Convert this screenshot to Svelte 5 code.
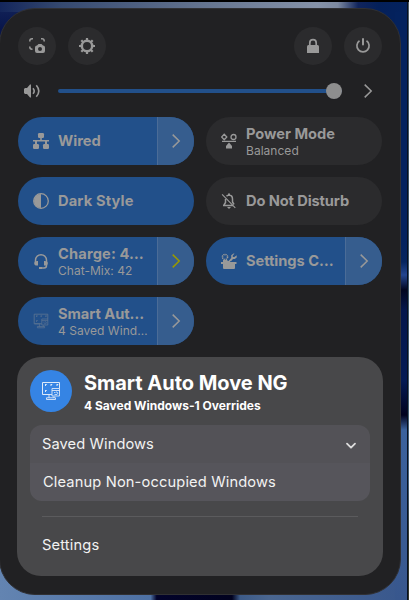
<script>
  const tiles = [
    { icon: 'wired', title: 'Wired', on: true, arrow: true, spacing: 0 },
    { icon: 'power', title: 'Power Mode', sub: 'Balanced', spacing: -0.03 },
    { icon: 'dark', title: 'Dark Style', on: true, spacing: 0.14 },
    { icon: 'dnd', title: 'Do Not Disturb', spacing: -0.12 },
    { icon: 'headset', title: 'Charge: 4…', sub: 'Chat-Mix: 42', on: true, arrow: true, warn: true, spacing: 0.14 },
    { icon: 'tools', title: 'Settings C…', on: true, arrow: true, spacing: -0.05 },
    { icon: 'monitor', title: 'Smart Aut…', sub: '4 Saved Wind…', on: true, arrow: true, spacing: -0.05 }
  ];
</script>

{#snippet monitor()}
  <g fill="none" stroke="currentColor" stroke-width="1">
    <path d="M9.500 13.500h-8v-12h17v6" />
    <path d="M11 7.500h7.500v7.500H11zM11 9.500h7.500M2 13.500h9M8 14v3M13 15.500v1.500M5.500 16.800h9v1.700h-9z" stroke-width=".9" />
    <path d="M13 11.500h1.500M13.500 13.500h2.500l.800-1.300-.800-1.200h-1" stroke-width=".8" />
    <path d="M4 5l1.500-1.500M9.500 5L11 3.500M15.500 5L17 3.500M4 11l1.500-1.500M4 3.500h1.500M9.500 3.500H11M15.500 3.500H17M4 9.500h1.500" />
  </g>
{/snippet}

{#snippet chevron()}
  <svg class="chev" width="16" height="16" viewBox="0 0 16 16"><path d="M4.700 1.600L11.200 8l-6.500 6.400" fill="none" stroke="currentColor" stroke-width="1.500" /></svg>
{/snippet}

{#snippet icon(name)}
  <svg class="icon" width="16" height="16" viewBox={name === 'monitor' ? '0 0 20 20' : '0 0 16 16'} fill="currentColor">
    {#if name === 'wired'}
      <rect x="5" y="0" width="6" height="5" rx="1.200" /><rect x="0" y="11" width="6" height="5" rx="1.200" /><rect x="10" y="11" width="6" height="5" rx="1.200" />
      <path d="M7.200 4h1.600v3H16v1.500h-2V12h-2V8.500H4V12H2V8.500H0V7h7.200z" />
    {:else if name === 'power'}
      <circle cx="12.500" cy="4" r="2.500" fill="none" stroke="currentColor" stroke-width="1.300" />
      <path d="M3.200 1.300L5.800 4 3.200 6.700.600 4z" fill="none" stroke="currentColor" stroke-width="1.300" />
      <path d="M1 7.800h14v1.300H1zM8 9.500L11 13v2.500H5V13z" />
    {:else if name === 'dark'}
      <circle cx="8" cy="8" r="7.300" fill="none" stroke="currentColor" stroke-width="1.300" /><path d="M8 1a7 7 0 000 14z" />
    {:else if name === 'dnd'}
      <path d="M2 12.500h10M3 12l1.500-2.500V6M5.500 3.300Q6.500 2 8 2q3.500.200 3.500 4v3l1.500 2.500M7 1.200h2" fill="none" stroke="currentColor" stroke-width="1.500" />
      <path d="M6 14h4l-2 2zM1.500 1l13.200 13.500-.800.800L.700 1.800z" />
    {:else if name === 'headset'}
      <path d="M2.500 9V7.200a5.500 5.500 0 0111 0V12.500q0 2.500-2.500 2.500H8" fill="none" stroke="currentColor" stroke-width="1.500" />
      <path d="M4.500 8H5v4.500H4Q1.200 12.500 1.200 10.200T4.500 8zM11.500 8H11v4.500h1q2.800 0 2.800-2.300T11.500 8zM6 14h3v2H6z" />
    {:else if name === 'tools'}
      <circle cx="4" cy="4" r="2.600" fill="none" stroke="currentColor" stroke-width="1.500" stroke-dasharray="1.300 .750" />
      <path d="M15.700 2.200V4.500L13.800 6H12l-2 2.300H7.300L10.200 5V2.200L12.500.500h1L11.800 2.400v1.500h1.500zM0 9h15.500v2H14v4q0 1-1 1H3q-1 0-1-1v-4H0zM2 7h4l1 1h2v1H2z" />
    {:else}{@render monitor()}{/if}
  </svg>
{/snippet}

<div class="desktop">
  <div class="panel">
    <div class="top">
      <button aria-label="Screenshot"><svg width="16" height="16" viewBox="0 0 16 16">
        <path d="M.8 3.500V3Q.8.800 3 .800h1M12 .800h1Q15.200.800 15.200 3v.500M.8 8.500V9q0 2.200 2.200 2.200h.500" fill="none" stroke="currentColor" stroke-width="1.500" />
        <path fill-rule="evenodd" d="M8 7.500L9.500 6h3L14 7.500q2 0 2 2V13q0 2-2 2H8q-2 0-2-2V9.500q0-2 2-2zM11 9a2 2 0 100 4 2 2 0 000-4z" fill="currentColor" />
      </svg></button>
      <button aria-label="Settings"><svg width="16" height="16" viewBox="0 0 16 16">
        <circle cx="8" cy="8" r="5.200" fill="none" stroke="currentColor" stroke-width="2.500" />
        <path d="M8 0v3M8 13v3M0 8h3M13 8h3M2.300 2.300l2 2M11.700 11.700l2 2M13.700 2.300l-2 2M4.300 11.700l-2 2" fill="none" stroke="currentColor" stroke-width="2.200" />
      </svg></button>
      <span class="grow"></span>
      <button aria-label="Lock"><svg width="16" height="16" viewBox="0 0 16 16">
        <path d="M4.800 8V4.900a3.200 3.200 0 016.400 0V8" fill="none" stroke="currentColor" stroke-width="1.700" /><path d="M2 8.500Q2 7 3.500 7h9Q14 7 14 8.500V15H2z" fill="currentColor" />
      </svg></button>
      <button aria-label="Power"><svg width="16" height="16" viewBox="0 0 16 16">
        <path d="M4.500 2.800a6.100 6.100 0 107 0" fill="none" stroke="currentColor" stroke-width="1.700" /><path d="M8 1v5.500" stroke="currentColor" stroke-width="2" stroke-linecap="round" />
      </svg></button>
    </div>

    <div class="volume">
      <svg width="16" height="16" viewBox="0 0 16 16"><path d="M0 6l1-1h2l3-3.500h1v13H6L3 11H1l-1-1z" fill="currentColor" />
        <path d="M9 5.200q2.400 2.800 0 5.600M12.300 2.200q5 5.800 0 11.600" fill="none" stroke="currentColor" stroke-width="1.600" /></svg>
      <div class="track"><span></span></div>
      {@render chevron()}
    </div>

    <div class="grid">
      {#each tiles as t}
        <div class="tile" class:on={t.on}>
          <div class="body">
            <span class="ic" class:dim={t.icon === 'monitor'}>{@render icon(t.icon)}</span>
            <div class="label" class:two={t.sub}><b style:letter-spacing="{t.spacing}px">{t.title}</b>{#if t.sub}<small>{t.sub}</small>{/if}</div>
          </div>
          {#if t.arrow}<div class="arrow" class:warn={t.warn}>{@render chevron()}</div>{/if}
        </div>
      {/each}
    </div>

    <div class="menu">
      <header>
        <div class="badge"><svg width="20" height="20" viewBox="0 0 20 20">{@render monitor()}</svg></div>
        <div class="heading"><h1>Smart Auto Move NG</h1><h2>4 Saved Windows-1 Overrides</h2></div>
      </header>
      <div class="sub">
        <div class="item"><span class="saved">Saved Windows</span><svg width="12" height="12" viewBox="0 0 12 12"><path d="M2 3.700l4 4 4-4" fill="none" stroke="currentColor" stroke-width="1.800" stroke-linecap="round" stroke-linejoin="round" /></svg></div>
        <div class="item second"><span class="clean">Cleanup Non-occupied Windows</span></div>
      </div>
      <hr />
      <div class="settings"><span>Settings</span></div>
    </div>
  </div>
</div>

<style>
  :global(body) { margin: 0; overflow: hidden; }
  .desktop {
    box-sizing: border-box; width: 409px; height: 600px; padding-top: 8px;
    font-family: Inter, sans-serif; color: #999;
    background:
      linear-gradient(#000, #000) 0 0 / 409px 2px no-repeat,
      linear-gradient(#50606c, #3d5566 30%, #48637a 80%, #34382c 90%) 408px 0 / 1px 600px no-repeat,
      linear-gradient(#071020, #071020) 407px 0 / 1px 600px no-repeat,
      linear-gradient(90deg, #14265b, #35496f 15%, #64748f 50%, #8592a8 78%, #7c89a0 83%, #10245c 88%, #04205a 93%, #04225e) 0 0 / 407px 12px no-repeat,
      linear-gradient(#04225e 0, #04225e 240px, #06255f 262px, #24468f 275px, #02061f 290px, #04164c 310px, #041b55 380px, #01021f 415px, #3b629d 430px, #38578d 600px) 395px 0 / 12px 600px no-repeat,
      linear-gradient(#04215c, #04215c) 360px 0 / 40px 60px no-repeat,
      linear-gradient(#14265b, #08154b 30px, #0a1a54) 0 0 / 40px 60px no-repeat,
      linear-gradient(90deg, #6384b1, #4e71a4 37%, #02032b 38.500%, #01021f 57%, #3d5b88 59%, #4a6690 66%, #38578d) 0 0 / 407px 600px no-repeat;
  }
  .panel { box-sizing: border-box; width: 402px; height: 587px; margin-left: -1px; padding: 18px 18px 0; border: 1px solid #303033; border-radius: 36px; background: #212123; }
  svg { display: block; flex: none; }
  .top { display: flex; gap: 12px; height: 38px; width: 364px; }
  .grow { flex: 1; }
  button { width: 38px; height: 38px; border: 0; padding: 0; border-radius: 50%; background: #2b2b2d; color: #999; display: grid; place-items: center; }
  .volume { display: flex; align-items: center; height: 52px; padding-left: 6px; width: 358px; }
  .track { width: 284px; margin-left: 18px; height: 4px; border-radius: 2px; background: #22508a; display: flex; justify-content: flex-end; align-items: center; }
  .track span { width: 16px; height: 16px; border-radius: 50%; background: #8e8e8e; flex: none; }
  .volume .chev { margin-left: 18px; }
  .grid { display: grid; grid-template-columns: 176px 176px; grid-auto-rows: 48px; gap: 12px; }
  .tile { display: flex; overflow: hidden; border-radius: 24px; background: #2b2b2d; }
  .tile.on { background: #22508a; }
  .body { flex: 1; display: flex; align-items: center; padding-left: 15px; min-width: 0; }
  .ic { margin-bottom: 1px; }
  .dim { opacity: .5; }
  .label { margin-left: 9px; display: flex; flex-direction: column; white-space: nowrap; }
  .label.two { padding-top: 2px; }
  b { font-size: 14.670px; line-height: 18px; font-weight: 700; }
  small { font-size: 12px; line-height: 16px; letter-spacing: .03px; }
  .arrow { box-sizing: border-box; width: 37px; border-left: 1px solid #4b6c97; background: #365d8e; display: grid; place-items: center; }
  .warn { color: #999900; }
  .menu { box-sizing: border-box; width: 366px; height: 219px; margin: 12px 0 0 -1px; border-radius: 24px; background: #48484a; color: #f2f2f2; padding: 13px; }
  header { display: flex; height: 42px; }
  .badge { width: 42px; height: 42px; border-radius: 50%; background: #3584e4; color: #dce9f8; display: grid; place-items: center; flex: none; }
  .heading { margin-left: 12px; white-space: nowrap; color: #fff; }
  h1 { margin: 0; font-size: 20px; line-height: 26px; font-weight: 700; letter-spacing: -.03px; }
  h2 { margin: 1px 0 0; font-size: 12px; line-height: 18px; font-weight: 700; }
  .sub { margin-top: 13px; height: 76px; border-radius: 12px; background: linear-gradient(#535257 38px, #56555b 38px); }
  .item { height: 38px; display: flex; align-items: center; justify-content: space-between; padding: 0 13px 0 12px; font-size: 14.670px; }
  .item.second { padding-left: 13px; }
  .item svg { margin-top: 3px; color: #ddd; }
  .saved { letter-spacing: .08px; }
  .clean { letter-spacing: .14px; }
  hr { margin: 15px 12px 0; border: 0; height: 1px; background: #5b5b5d; }
  .settings { height: 56px; display: flex; align-items: center; padding-left: 12px; font-size: 14.670px; letter-spacing: .15px; }
</style>
